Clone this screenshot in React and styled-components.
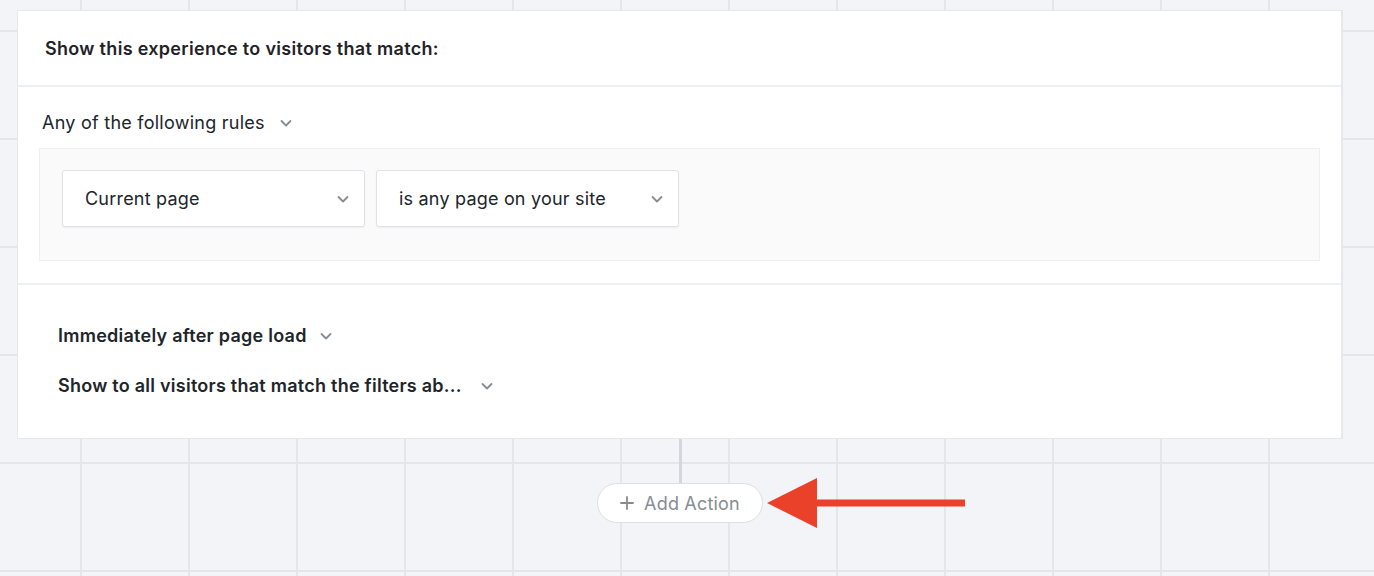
import styled, { createGlobalStyle } from "styled-components"

const GlobalStyle = createGlobalStyle`
  html, body {
    margin: 0;
    padding: 0;
  }
  body {
    font-family: Inter, "Noto Sans", "Liberation Sans", sans-serif;
    color: #1f2328;
    background-color: #f3f4f8;
    background-image:
      linear-gradient(to right, #e4e6ea 2px, transparent 2px),
      linear-gradient(to bottom, #e4e6ea 2px, transparent 2px);
    background-size: 108px 108px;
    background-position: 80px 30px;
    min-height: 576px;
    overflow: hidden;
  }
`

const Page = styled.div`
  padding: 10px 0 0 17px;
  width: 1326px;
`

const Card = styled.section`
  background: #fff;
  border: 1px solid #e6e8eb;
  border-right-width: 2px;
`

const CardHeader = styled.div`
  height: 74px;
  display: flex;
  align-items: center;
  padding-left: 27px;
  border-bottom: 2px solid #eeeff1;
  font-size: 18px;
  font-weight: 600;
  letter-spacing: 0.31px;
`

const RulesSection = styled.div`
  padding: 24px 21px 22px 21px;
  border-bottom: 2px solid #eeeff1;
`

const Dropdown = styled.div`
  display: inline-flex;
  align-items: center;
  gap: ${({ $gap }) => $gap || 12}px;
  padding-left: ${({ $indent }) => $indent || 0}px;
  font-size: 18px;
  font-weight: ${({ $bold }) => ($bold ? 600 : 400)};
  letter-spacing: 0.25px;
  line-height: 24px;
  color: #20252a;
`

const Chevron = () => (
  <svg width="14" height="14" viewBox="0 0 14 14" fill="none">
    <path d="M2.5 5 L7 9.5 L11.5 5" stroke="#868c92" strokeWidth="1.8" strokeLinecap="round" strokeLinejoin="round" />
  </svg>
)

const RuleBox = styled.div`
  margin-top: 13px;
  background: #fafafa;
  border: 1px solid #eeeff1;
  padding: 21px 22px 33px;
  display: flex;
  gap: 11px;
`

const Select = styled.div`
  width: 303px;
  height: 57px;
  box-sizing: border-box;
  background: #fff;
  border: 1px solid #dfe2e6;
  border-radius: 3px;
  box-shadow: 0 1px 2px rgba(0, 0, 0, 0.06);
  display: flex;
  align-items: center;
  justify-content: space-between;
  padding: 0 14px 0 22px;
  font-size: 18px;
  letter-spacing: 0.2px;
  color: #20252a;
`

const TriggerSection = styled.div`
  padding: 39px 40px 40px;
  display: flex;
  flex-direction: column;
  align-items: flex-start;
  gap: 26px;
`

const ActionArea = styled.div`
  display: flex;
  flex-direction: column;
  align-items: center;
`

const Connector = styled.div`
  width: 3px;
  height: 44px;
  background: #d3d6da;
`

const AddButton = styled.button`
  position: relative;
  height: 40px;
  padding: 0 22px;
  display: inline-flex;
  align-items: center;
  gap: 10px;
  background: #fff;
  border: 1px solid #dedfe2;
  border-radius: 20px;
  font-family: inherit;
  font-size: 18px;
  letter-spacing: 0.2px;
  color: #878c91;
`

const Arrow = styled.svg`
  position: absolute;
  left: calc(100% + 5px);
  top: 50%;
  transform: translateY(-50%);
`

export default function App() {
  return (
    <>
      <GlobalStyle />
      <Page>
        <Card>
          <CardHeader>Show this experience to visitors that match:</CardHeader>
          <RulesSection>
            <Dropdown $gap={14} $indent={3}>
              Any of the following rules <Chevron />
            </Dropdown>
            <RuleBox>
              <Select>
                Current page <Chevron />
              </Select>
              <Select>
                is any page on your site <Chevron />
              </Select>
            </RuleBox>
          </RulesSection>
          <TriggerSection>
            <Dropdown $bold>
              Immediately after page load <Chevron />
            </Dropdown>
            <Dropdown $bold $gap={18}>
              Show to all visitors that match the filters ab... <Chevron />
            </Dropdown>
          </TriggerSection>
        </Card>
        <ActionArea>
          <Connector />
          <AddButton>
            <svg width="14" height="14" viewBox="0 0 14 14">
              <path d="M7 1 V13 M1 7 H13" stroke="#878c91" strokeWidth="1.8" strokeLinecap="round" />
            </svg>
            Add Action
            <Arrow width="200" height="52" viewBox="0 0 200 52">
              <polygon points="0,26 50,1 50,51" fill="#e9412a" />
              <rect x="49" y="22.5" width="149" height="7" fill="#e9412a" />
            </Arrow>
          </AddButton>
        </ActionArea>
      </Page>
    </>
  )
}
